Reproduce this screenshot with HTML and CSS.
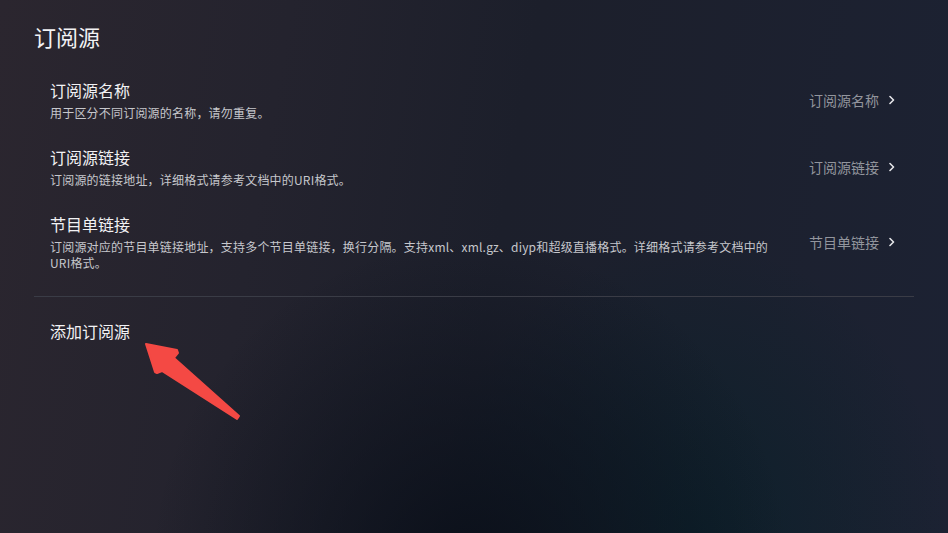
FILE: index.html
```html
<!DOCTYPE html>
<html lang="zh-CN">
<head>
<meta charset="utf-8">
<title>订阅源</title>
<link rel="stylesheet" href="styles.css">
</head>
<body>
<div class="page">
  <h1 class="title">订阅源</h1>
  <div class="list">
    <div class="item">
      <div class="text">
        <div class="name">订阅源名称</div>
        <div class="desc">用于区分不同订阅源的名称，请勿重复。</div>
      </div>
      <div class="value">订阅源名称<svg class="chev" viewBox="0 0 6 10" width="6" height="10"><polyline points="1,1.5 4.5,5 1,8.5"/></svg></div>
    </div>
    <div class="item">
      <div class="text">
        <div class="name">订阅源链接</div>
        <div class="desc">订阅源的链接地址，详细格式请参考文档中的URI格式。</div>
      </div>
      <div class="value">订阅源链接<svg class="chev" viewBox="0 0 6 10" width="6" height="10"><polyline points="1,1.5 4.5,5 1,8.5"/></svg></div>
    </div>
    <div class="item">
      <div class="text">
        <div class="name">节目单链接</div>
        <div class="desc desc-wide">订阅源对应的节目单链接地址，支持多个节目单链接，换行分隔。支持xml、xml.gz、diyp和超级直播格式。详细格式请参考文档中的URI格式。</div>
      </div>
      <div class="value">节目单链接<svg class="chev" viewBox="0 0 6 10" width="6" height="10"><polyline points="1,1.5 4.5,5 1,8.5"/></svg></div>
    </div>
  </div>
  <div class="divider"></div>
  <div class="add">添加订阅源</div>
  <svg class="arrow" viewBox="0 0 948 533" width="948" height="533">
    <polygon points="146,344 177,350 178,353 174,358 239,416 237,419 162,371 157,373 155,372"/>
  </svg>
</div>
</body>
</html>
```

FILE: styles.css
```css
html, body {
  margin: 0;
  padding: 0;
}
body {
  width: 948px;
  height: 533px;
  overflow: hidden;
  font-family: "Noto Sans CJK SC", "Noto Sans", sans-serif;
  background:
    radial-gradient(ellipse 320px 330px at 470px 570px, rgba(10, 15, 25, 0.95), rgba(10, 15, 25, 0)),
    radial-gradient(ellipse 260px 300px at 690px 540px, rgba(10, 32, 42, 0.85), rgba(10, 32, 42, 0)),
    linear-gradient(100deg, #2b262f 0%, #24232e 28%, #1c1f2b 52%, #1c2233 100%);
  color: #f0f0f2;
}
.page {
  position: relative;
  width: 948px;
  height: 533px;
  padding: 21px 34px 0 34px;
  box-sizing: border-box;
}
.title {
  margin: 0;
  font-size: 22px;
  line-height: 30px;
  font-weight: 400;
  color: #f2f2f4;
  height: 46px;
}
.list {
  display: flex;
  flex-direction: column;
}
.item {
  display: flex;
  align-items: center;
  justify-content: space-between;
  padding: 12px 19px 13px 16px;
}
.text {
  display: flex;
  flex-direction: column;
  gap: 4px;
}
.name {
  font-size: 16px;
  line-height: 22px;
  color: #f2f2f4;
}
.desc {
  font-size: 12px;
  line-height: 16px;
  letter-spacing: 0.2px;
  color: #c6c7cc;
}
.desc-wide {
  max-width: 724px;
}
.value {
  display: flex;
  align-items: center;
  gap: 10px;
  font-size: 14px;
  line-height: 20px;
  color: #92959d;
  white-space: nowrap;
}
.chev {
  display: block;
  fill: none;
  stroke: #e4e5e8;
  stroke-width: 1.6;
  stroke-linecap: round;
  stroke-linejoin: round;
}
.divider {
  height: 1px;
  background: #3a3c46;
  margin-top: 12px;
}
.add {
  padding: 23px 16px 0 16px;
  font-size: 16px;
  line-height: 22px;
  color: #f2f2f4;
}
.arrow {
  position: absolute;
  left: 0;
  top: 0;
  pointer-events: none;
}
.arrow polygon {
  fill: #f44944;
  stroke: #f44944;
  stroke-width: 2;
  stroke-linejoin: round;
}
```
